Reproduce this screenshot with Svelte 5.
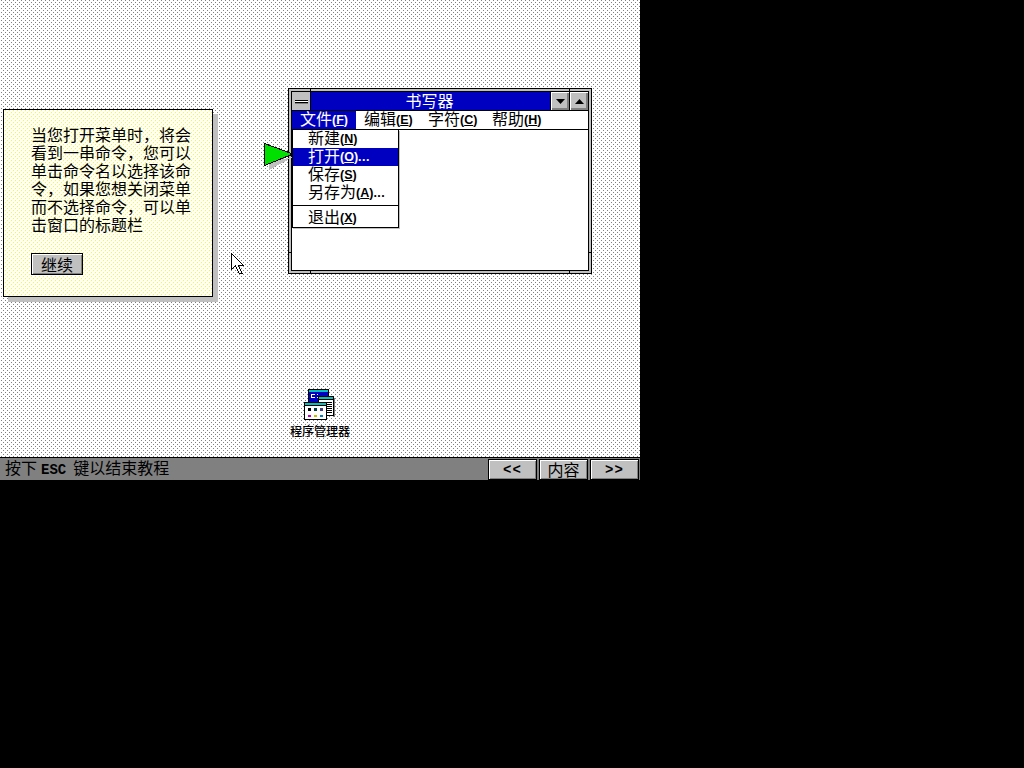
<script>
  const helpLines = ['当您打开菜单时，将会', '看到一串命令，您可以', '单击命令名以选择该命', '令，如果您想关闭菜单', '而不选择命令，可以单', '击窗口的标题栏'];
  const menus = [['文件', 'F'], ['编辑', 'E'], ['字符', 'C'], ['帮助', 'H']];
  const items = [['新建', 'N', ''], ['打开', 'O', '...'], ['保存', 'S', ''], ['另存为', 'A', '...']];
</script>

<div class="desktop">
  <main class="canvas">
    <section class="help">
      <div class="help-text">
        {#each helpLines as line}<div class="row">{line}</div>{/each}
      </div>
      <button class="btn continue">继续</button>
    </section>

    <section class="window">
      <div class="titlebar">
        <div class="sysbox"><span></span></div>
        <div class="title">书写器</div>
        <div class="winbtn"><svg width="9" height="5" viewBox="0 0 9 5"><path d="M0 0H9L4.5 5Z" /></svg></div>
        <div class="winbtn"><svg width="9" height="5" viewBox="0 0 9 5"><path d="M0 5H9L4.5 0Z" /></svg></div>
      </div>
      <nav class="menubar">
        {#each menus as [name, key], i}
          <div class="menu" class:active={i === 0}>{name}<b>(<u>{key}</u>)</b></div>
        {/each}
      </nav>
      <div class="client">
        <div class="dropdown">
          {#each items as [name, key, dots], i}
            <div class="item" class:sel={i === 1}>{name}<b>(<u>{key}</u>)</b>{#if dots}<b class="dots">{dots}</b>{/if}</div>
          {/each}
          <div class="sep"></div>
          <div class="item">退出<b>(<u>X</u>)</b></div>
        </div>
      </div>
      <i class="tick tv" style="left:21px;top:0"></i>
      <i class="tick tv" style="left:280px;top:0"></i>
      <i class="tick tv" style="left:21px;bottom:0"></i>
      <i class="tick tv" style="left:280px;bottom:0"></i>
      <i class="tick th" style="left:0;top:163px"></i>
      <i class="tick th" style="right:0;top:163px"></i>
    </section>

    <svg class="pointer" width="32" height="30" viewBox="0 0 32 30" shape-rendering="crispEdges">
      <path d="M6 28 L30 15 L6 20 Z" fill="#c0c0c0" />
      <path d="M1.5 1.5 L30 12 L1.5 23.5 Z" fill="#00e000" stroke="#000" stroke-width="1" />
    </svg>

    <svg class="cursor" width="13" height="21" viewBox="0 0 13 21" shape-rendering="crispEdges">
      <path d="M.5.5V16.5L4.5 12.5L8 20H11L7.5 12.5H12.5Z" fill="#fff" stroke="#000" />
    </svg>

    <figure class="icon">
      <svg width="32" height="32" viewBox="0 0 32 32" shape-rendering="crispEdges">
        <rect x="4.5" y="1.5" width="20" height="16" fill="#0000c0" stroke="#000" />
        <rect x="5" y="2" width="19" height="2" fill="#00c0c0" />
        <path d="M7 6H11V7H8V9H11V10H7ZM13 6H14V7H13ZM13 9H14V10H13Z" fill="#fff" />
        <rect x="14.5" y="8.5" width="15" height="19" fill="#fff" stroke="#000" />
        <rect x="15" y="9" width="14" height="2" fill="#00c0c0" />
        <rect x="15" y="11" width="14" height="1" fill="#000" />
        <path d="M23 14H28M23 16H28M23 18H28M23 20H28M23 22H28M23 24H28" stroke="#000" />
        <rect x="30" y="10" width="1" height="19" fill="#808080" />
        <rect x=".5" y="14.5" width="22" height="17" fill="#fff" stroke="#000" />
        <rect x="1" y="15" width="21" height="2" fill="#00c0c0" />
        <rect x="1" y="17" width="21" height="1" fill="#000" />
        <rect x="4" y="20" width="3" height="3" fill="#000" />
        <rect x="10" y="20" width="3" height="3" fill="#004040" />
        <rect x="16" y="20" width="3" height="3" fill="#404080" />
        <rect x="4" y="27" width="3" height="2" fill="#c000c0" />
        <rect x="10" y="27" width="3" height="2" fill="#c0c000" />
        <rect x="16" y="27" width="3" height="2" fill="#0080c0" />
      </svg>
      <figcaption>程序管理器</figcaption>
    </figure>
  </main>

  <footer class="status">
    <div class="status-text">按下<b>ESC</b>键以结束教程</div>
    <div class="nav">
      <button class="btn nav-btn"><b class="arrows">&lt;&lt;</b></button>
      <button class="btn nav-btn">内容</button>
      <button class="btn nav-btn"><b class="arrows">&gt;&gt;</b></button>
    </div>
  </footer>
</div>

<style>
  :global(body) {
    margin: 0;
    background: #000;
  }
  .desktop {
    width: 640px;
    height: 480px;
    display: flex;
    flex-direction: column;
    font: 16px/14px "Noto Sans CJK SC", "Liberation Sans", sans-serif;
    color: #000;
  }
  .canvas {
    position: relative;
    flex: 1;
    background: #fff url("data:image/svg+xml,%3Csvg xmlns='http://www.w3.org/2000/svg' width='4' height='4' shape-rendering='crispEdges'%3E%3Crect x='1' y='0' width='1' height='1' fill='%23808080'/%3E%3Crect x='3' y='2' width='1' height='1' fill='%23808080'/%3E%3C/svg%3E");
  }
  .help {
    position: absolute;
    left: 3px;
    top: 109px;
    box-sizing: border-box;
    width: 210px;
    height: 188px;
    padding: 17px 0 0 27px;
    border: 1px solid #000;
    background: #fff url("data:image/svg+xml,%3Csvg xmlns='http://www.w3.org/2000/svg' width='4' height='4' shape-rendering='crispEdges'%3E%3Crect x='1' y='0' width='1' height='1' fill='%23ffff00'/%3E%3Crect x='3' y='2' width='1' height='1' fill='%23ffff00'/%3E%3C/svg%3E");
    box-shadow: 5px 5px 0 #c0c0c0;
  }
  .help-text {
    white-space: nowrap;
    height: 126px;
  }
  .row {
    height: 18px;
  }
  .btn {
    box-sizing: border-box;
    margin: 0;
    padding: 0;
    font: inherit;
    color: #000;
    background: #c0c0c0;
    border: 1px solid #000;
    box-shadow: inset 1px 1px 0 #fff, inset -1px -1px 0 #808080;
  }
  .continue {
    display: block;
    width: 52px;
    height: 22px;
  }
  .pointer {
    position: absolute;
    left: 263px;
    top: 142px;
  }
  .window {
    position: absolute;
    left: 288px;
    top: 88px;
    box-sizing: border-box;
    width: 304px;
    height: 186px;
    display: flex;
    flex-direction: column;
    background: #fff;
    border: 1px solid #000;
    outline: 3px solid #c0c0c0;
    outline-offset: -4px;
    padding: 3px;
  }
  .window::after {
    content: "";
    position: absolute;
    inset: 2px;
    border: 1px solid #000;
    pointer-events: none;
  }
  .tick {
    position: absolute;
    background: #000;
  }
  .tv {
    width: 1px;
    height: 3px;
  }
  .th {
    width: 3px;
    height: 1px;
  }
  .titlebar {
    display: flex;
    height: 19px;
    border-bottom: 1px solid #000;
    box-sizing: border-box;
    flex: none;
  }
  .sysbox {
    width: 19px;
    background: #c0c0c0;
    border-right: 1px solid #000;
    display: flex;
    align-items: center;
    justify-content: center;
    box-sizing: border-box;
  }
  .sysbox span {
    width: 13px;
    height: 3px;
    background: #fff;
    border: solid #000;
    border-width: 1px 0;
    box-sizing: border-box;
    box-shadow: 0 1px 0 #808080;
  }
  .title {
    flex: 1;
    background: #0000c0;
    color: #fff;
    text-align: center;
    line-height: 16px;
    padding-right: 2px;
  }
  .winbtn {
    width: 19px;
    background: #c0c0c0;
    border-left: 1px solid #000;
    box-sizing: border-box;
    box-shadow: inset 1px 1px 0 #fff, inset -2px -2px 0 #808080;
    display: flex;
    align-items: center;
    justify-content: center;
  }
  .winbtn svg {
    fill: #000;
  }
  .menubar {
    display: flex;
    height: 19px;
    flex: none;
    box-sizing: border-box;
    border-bottom: 1px solid #000;
  }
  .menu {
    padding: 0 8px 0 8px;
    width: 64px;
    box-sizing: border-box;
    white-space: nowrap;
  }
  .menu.active {
    background: #0000c0;
    color: #fff;
  }
  b {
    font: bold 12.5px/10px "Liberation Sans", sans-serif;
    vertical-align: 1px;
  }
  .dots {
    letter-spacing: .5px;
  }
  .arrows {
    font: bold 14px/14px "Liberation Mono", monospace;
    letter-spacing: 1px;
    vertical-align: baseline;
  }
  .client {
    position: relative;
    flex: 1;
    background: #fff;
  }
  .dropdown {
    position: absolute;
    left: 0;
    top: 0;
    box-sizing: border-box;
    width: 107px;
    height: 98px;
    background: #fff;
    border: solid #000;
    border-width: 0 1px 1px 1px;
    box-shadow: 1px 1px 0 #c0c0c0;
  }
  .item {
    padding-left: 15px;
    height: 18px;
    white-space: nowrap;
  }
  .item.sel {
    background: #0000c0;
    color: #fff;
  }
  .sep {
    height: 1px;
    background: #000;
    margin: 3px 0 3px -1px;
    width: 107px;
  }
  .cursor {
    position: absolute;
    left: 231px;
    top: 253px;
  }
  .icon {
    position: absolute;
    left: 288px;
    top: 388px;
    width: 64px;
    margin: 0;
    display: flex;
    flex-direction: column;
    align-items: center;
  }
  .icon svg {
    display: block;
  }
  figcaption {
    margin-top: 4px;
    font-size: 12px;
    line-height: 14px;
    font-weight: 500;
    white-space: nowrap;
  }
  .status {
    display: flex;
    height: 23px;
    flex: none;
    box-sizing: border-box;
    background: #808080;
    border-top: 1px solid #000;
    justify-content: space-between;
  }
  .status-text {
    padding-left: 5px;
    line-height: 18px;
    white-space: nowrap;
  }
  .status-text b {
    font: bold 14px/14px "Liberation Mono", monospace;
    margin: 0 7px 0 4px;
    vertical-align: baseline;
  }
  .nav {
    display: flex;
    gap: 2px;
    padding: 1px 1px 0 0;
  }
  .nav-btn {
    width: 49px;
    height: 21px;
    line-height: 14px;
    padding-bottom: 2px;
  }
</style>
